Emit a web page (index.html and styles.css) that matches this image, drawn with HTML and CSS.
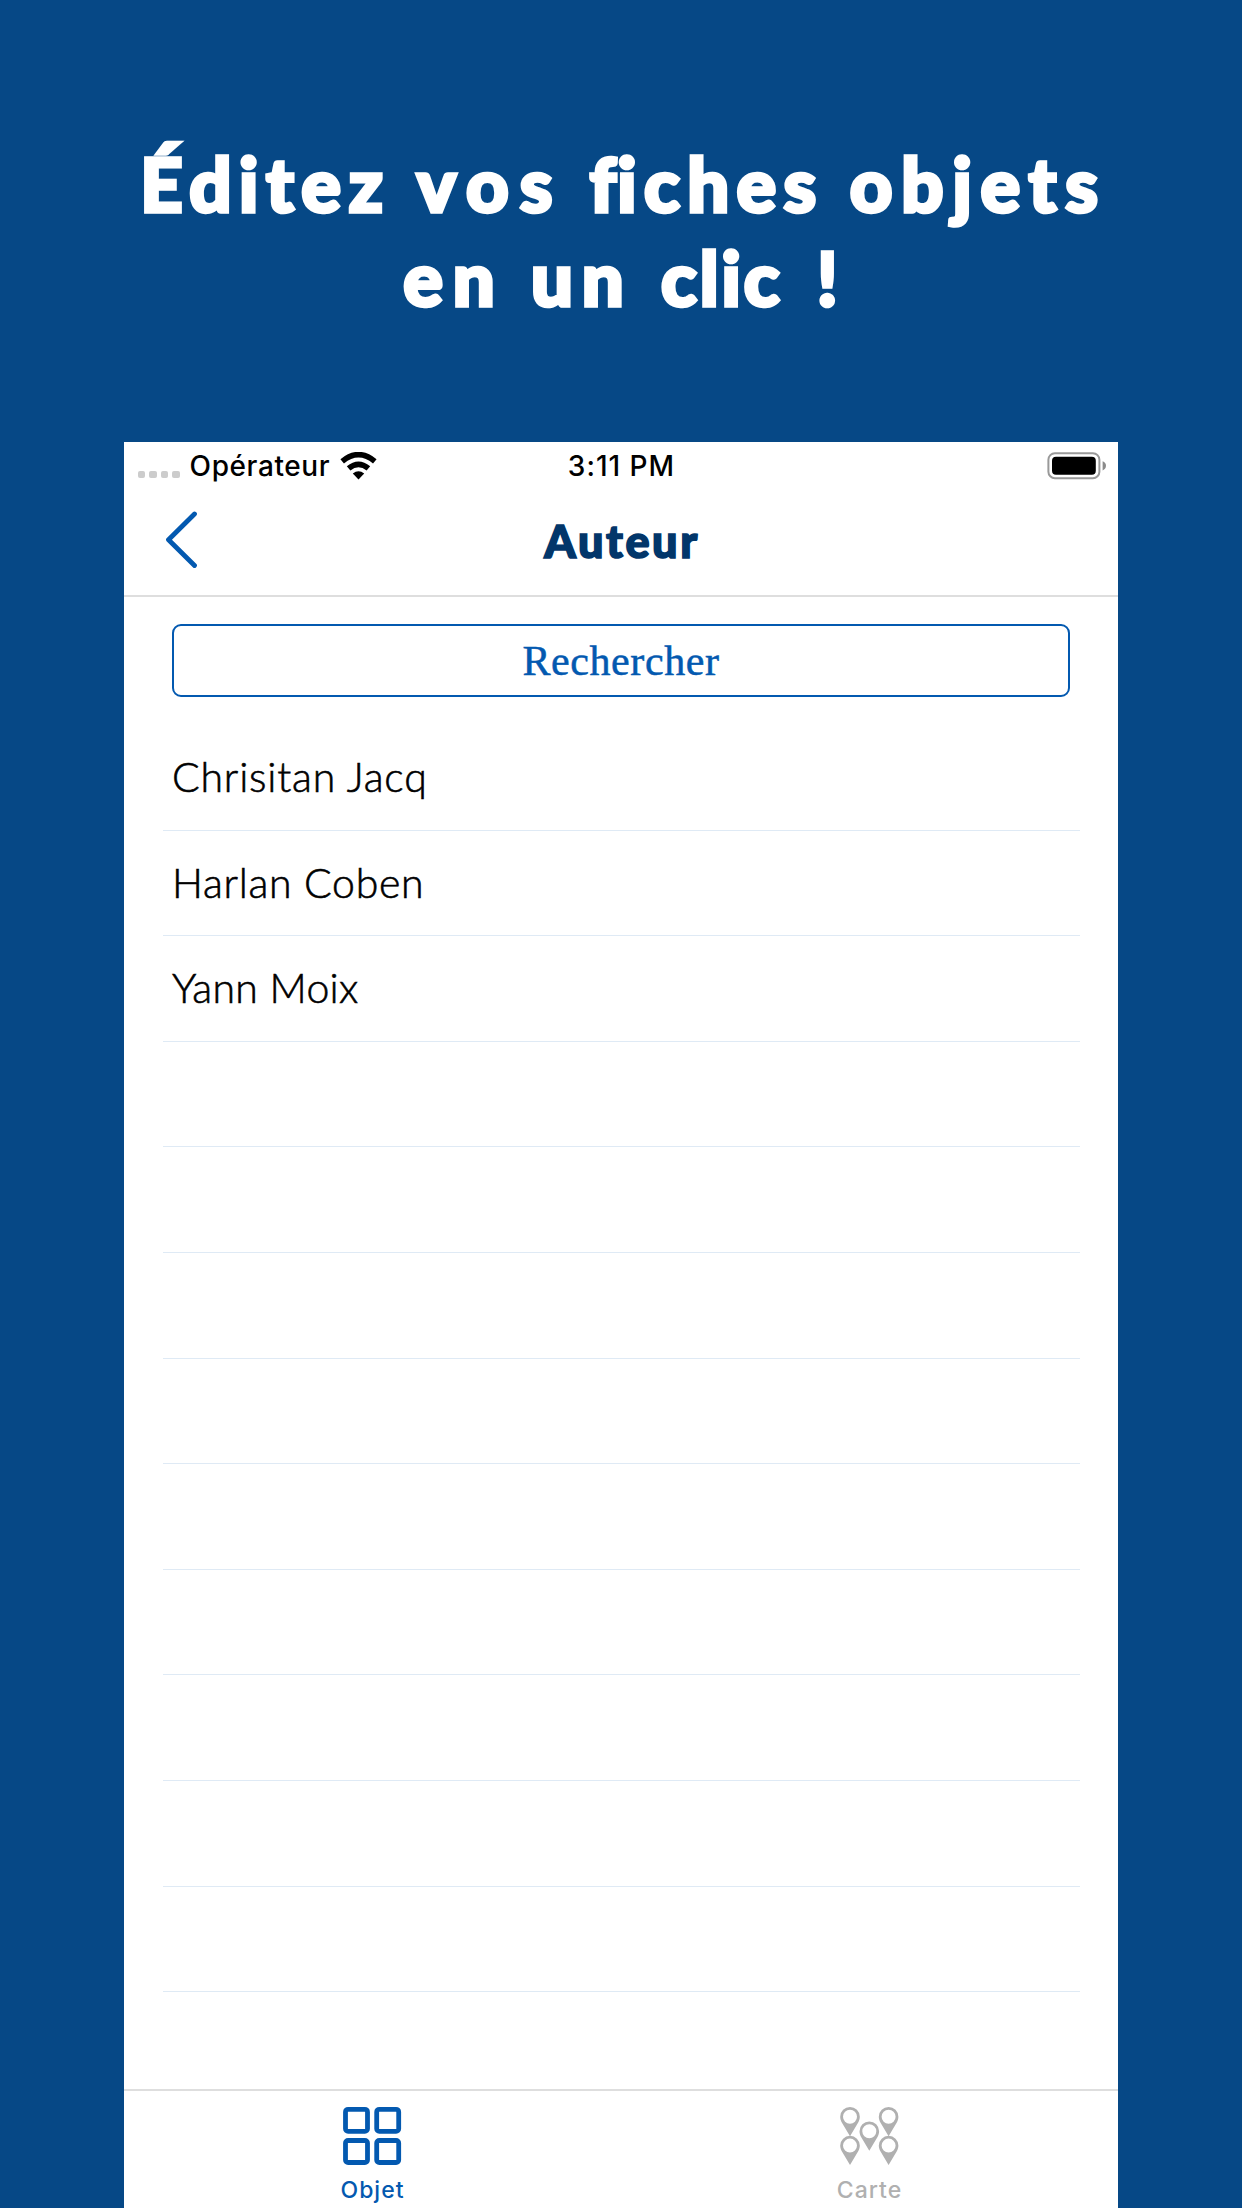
FILE: index.html
```html
<!DOCTYPE html>
<html lang="fr">
<head>
<meta charset="utf-8">
<title>Auteur</title>
<link rel="stylesheet" href="styles.css">
</head>
<body>
<h1 class="headline">
  <span class="line"><span class="w-editez">Éditez</span> <span class="w-vos">vos</span> <span class="w-fiches"><span class="tight">f</span>iches</span> <span class="w-objets">objets</span></span>
  <span class="line line-two"><span class="w-en">en</span> <span class="w-un">un</span> <span class="w-clic">clic</span> <span>!</span></span>
</h1>
<main class="phone">
  <div class="status">
    <div class="carrier">
      <span class="signal"><i></i><i></i><i></i><i></i></span>
      <span class="operator">Opérateur</span>
      <svg class="wifi" width="37" height="28" viewBox="0 0 37 28">
        <path d="M2.2 9.3Q18.5-4 34.8 9.3" fill="none" stroke="#000" stroke-width="5.6"/>
        <path d="M8.6 16.4Q18.5 8.2 28.4 16.4" fill="none" stroke="#000" stroke-width="5.6"/>
        <path d="M18.5 27.4 12.8 21.6Q18.5 17 24.2 21.6Z"/>
      </svg>
    </div>
    <span class="time">3:11 PM</span>
    <svg class="battery" width="60" height="28" viewBox="0 0 60 28">
      <rect x="1.4" y="1.2" width="51" height="25" rx="6.5" fill="none" stroke="#999" stroke-width="2"/>
      <rect x="5" y="4.8" width="43.8" height="18" rx="4" fill="#000"/>
      <path d="M55.6 9.2Q59 10.6 59 13.8T55.6 18.4Z" fill="#8b8b8b"/>
    </svg>
  </div>
  <header class="nav">
    <svg class="back" width="34" height="58" viewBox="0 0 34 58"><path d="M29.5 3 3.5 28.7 29.5 54.5" fill="none" stroke="#0359b0" stroke-width="4.8" stroke-linecap="round" stroke-linejoin="round"/></svg>
    <h2 class="title">Auteur</h2>
  </header>
  <section class="content">
    <button class="search">Rechercher</button>
    <ul class="list">
      <li class="row"><span class="n1">Chrisitan Jacq</span></li>
      <li class="row"><span class="n2">Harlan Coben</span></li>
      <li class="row"><span class="n3">Yann Moix</span></li>
      <li class="row"></li><li class="row"></li><li class="row"></li>
      <li class="row"></li><li class="row"></li><li class="row"></li>
      <li class="row"></li><li class="row"></li><li class="row"></li>
    </ul>
  </section>
  <nav class="tabs">
    <a class="tab active">
      <svg width="60" height="60" viewBox="0 0 60 60" fill="none" stroke="#0359b0" stroke-width="4.8">
        <rect x="2.5" y="3.3" width="22" height="22" rx="2.6"/><rect x="33.7" y="3.3" width="22" height="22" rx="2.6"/>
        <rect x="2.5" y="34.5" width="22" height="22" rx="2.6"/><rect x="33.7" y="34.5" width="22" height="22" rx="2.6"/>
      </svg>
      <span class="label">Objet</span>
    </a>
    <a class="tab">
      <svg width="60" height="60" viewBox="0 0 60 60" fill="#b0b0b0" fill-rule="evenodd">
        <defs><path id="pin" d="M10 0A9.8 9.8 0 0 0 .2 9.8C.2 12 .9 13.8 1.8 15.5L10 29.2 18.2 15.5C19.1 13.8 19.8 12 19.8 9.8A9.8 9.8 0 0 0 10 0ZM10 2.8A7 7 0 1 1 10 16.8 7 7 0 0 1 10 2.8Z"/></defs>
        <use href="#pin" x="0" y="1"/><use href="#pin" x="38.6" y="1"/><use href="#pin" x="19.3" y="15.5"/><use href="#pin" x="0" y="29.8"/><use href="#pin" x="38.6" y="29.8"/>
      </svg>
      <span class="label">Carte</span>
    </a>
  </nav>
</main>
</body>
</html>
```
FILE: styles.css
```css
* { box-sizing: border-box; }
body {
  margin: 0;
  height: 2208px;
  overflow: hidden;
  display: flex;
  flex-direction: column;
  align-items: center;
  background: #064886;
  font-family: Inter, sans-serif;
}
.headline {
  margin: 0;
  height: 442px;
  padding-top: 137px;
  font: 900 74px/94px Lato, sans-serif;
  color: #fff;
  -webkit-text-stroke: 3.6px #fff;
  text-align: center;
  white-space: nowrap;
  letter-spacing: 6px;
  word-spacing: 2.5px;
}
.line { display: block; padding-left: 5px; }
.line-two { word-spacing: 5.5px; }
.w-editez { letter-spacing: 7.7px; }
.w-vos { letter-spacing: 11px; }
.w-fiches { letter-spacing: 7.4px; }
.w-objets { letter-spacing: 8.8px; }
.w-en { letter-spacing: 10px; margin-right: -3px; }
.w-un { letter-spacing: 9px; margin-right: -1px; }
.w-clic { letter-spacing: 3px; margin-right: 5px; }
.w-fiches .tight { letter-spacing: 1px; }
.phone {
  width: 994px;
  height: 1766px;
  display: flex;
  flex-direction: column;
  background: #fff;
}
.status {
  height: 48px;
  padding: 0 11px 0 14px;
  display: grid;
  grid-template-columns: 1fr auto 1fr;
  align-items: center;
  font-size: 28px;
  font-weight: 500;
  line-height: 48px;
  color: #000;
}
.carrier { display: flex; align-items: center; }
.signal { display: flex; gap: 4px; padding-top: 17px; }
.signal i { width: 7.4px; height: 7.4px; border-radius: 2px; background: #ccc; }
.operator { margin: 0 10px; letter-spacing: .6px; }
.time { letter-spacing: 1px; margin-right: 2px; }
.battery { justify-self: end; }
.nav {
  height: 107px;
  flex: none;
  display: grid;
  grid-template-columns: 1fr auto 1fr;
  align-items: start;
  border-bottom: 2px solid #dedede;
}
.back { margin: 21px 0 0 41px; }
.title {
  margin: 21px 0 0 2px;
  font: 900 45px/60px Lato, sans-serif;
  color: #02366a;
  -webkit-text-stroke: 1.6px #02366a;
  letter-spacing: 2.6px;
}
.content { flex: 1; padding: 27px 38px 0 39px; }
.search {
  display: block;
  width: 898px;
  height: 73px;
  margin-left: 9px;
  padding: 0;
  border: 2px solid #0359b0;
  border-radius: 9px;
  background: #fff;
  color: #0359b0;
  font: 42px/66px "Liberation Serif", serif;
  letter-spacing: .6px;
  -webkit-text-stroke: .5px #0359b0;
}
.list { list-style: none; margin: 28px 0 0; padding: 0; }
.row {
  height: 105.6px;
  padding: 25px 0 0 9px;
  border-bottom: 1px solid #dfeaf5;
  font: 300 41px/54px Lato, sans-serif;
  color: #000;
  -webkit-text-stroke: .6px #000;
}
.n1 { letter-spacing: .8px; }
.n2 { letter-spacing: .7px; }
.n3 { letter-spacing: .3px; }
.tabs {
  height: 119px;
  flex: none;
  display: grid;
  grid-template-columns: 1fr 1fr;
  border-top: 2px solid #dedede;
}
.tab {
  display: flex;
  flex-direction: column;
  align-items: center;
  padding-top: 15px;
  color: #b0b0b0;
}
.label { font-size: 23px; font-weight: 450; line-height: 30px; margin-top: 9px; letter-spacing: 1px; }
.active { color: #0359b0; }
```
